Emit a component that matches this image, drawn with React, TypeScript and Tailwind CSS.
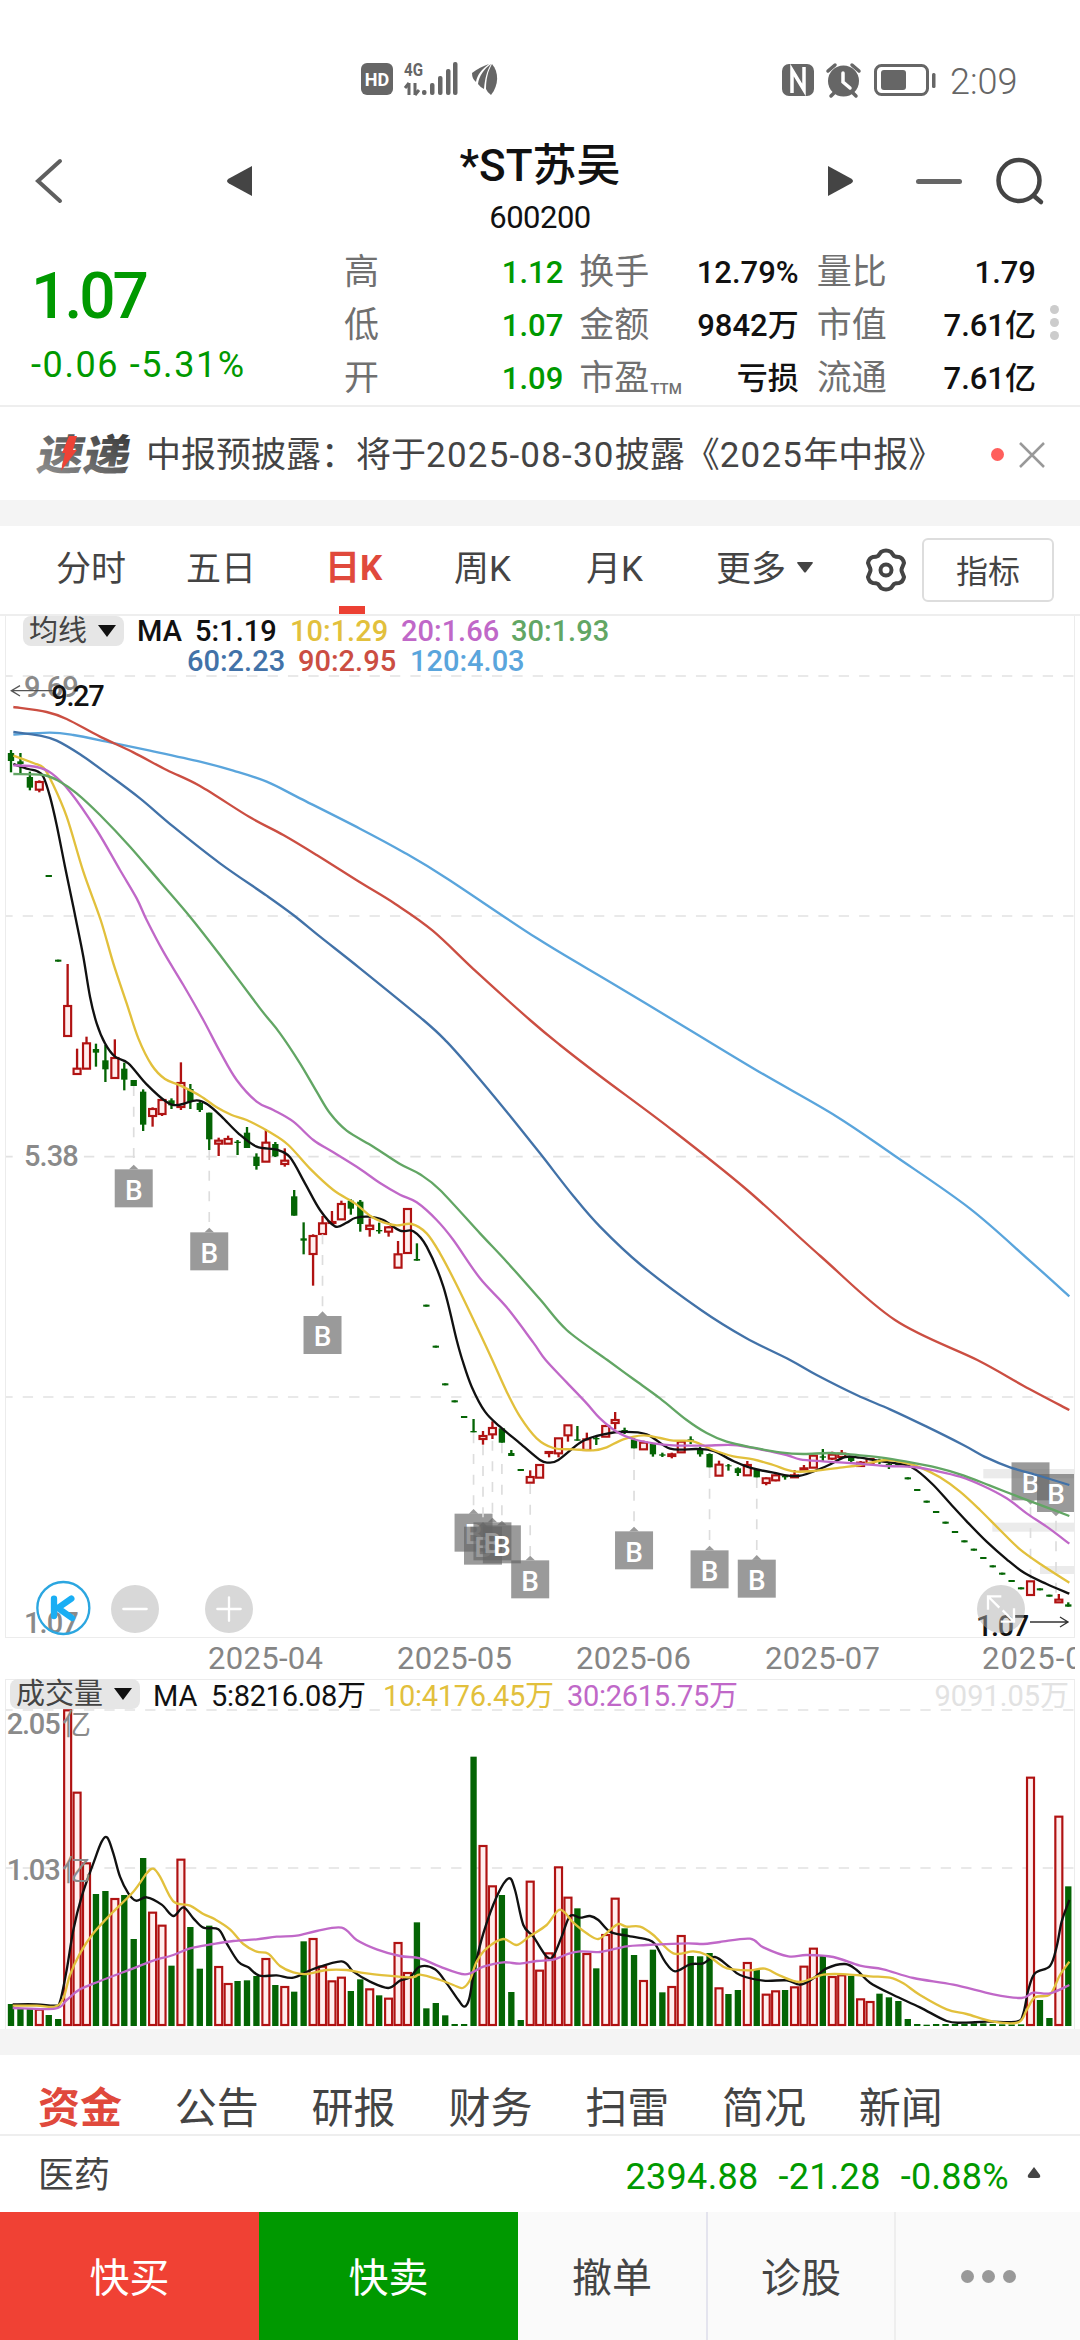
import type { ReactNode } from "react";

// Chart panes are drawn in thirds of a pixel.
const STEP = 28.32;
const FIRST = 33;
const VOLUME_BASE = 1038;

const UP = "#b01212";
const DOWN = "#046404";

// [high, body top, body bottom, low, volume], volume is negative on a falling day
type Candle = [number, number, number, number, number];

const candles: Candle[] = [
  [402, 411, 435, 469, -66],
  [411, 436, 444, 472, -52],
  [467, 483, 515, 523, -52],
  [493, 497, 522, 529, 52],
  [777, 777, 783, 783, -33],
  [1031, 1031, 1037, 1037, -21],
  [1044, 1169, 1261, 1261, 950],
  [1298, 1357, 1375, 1375, 703],
  [1262, 1281, 1359, 1359, 491],
  [1283, 1299, 1310, 1352, -396],
  [1287, 1333, 1360, 1398, -405],
  [1270, 1325, 1387, 1387, 384],
  [1340, 1358, 1391, 1423, -393],
  [1392, 1392, 1410, 1410, -261],
  [1420, 1427, 1526, 1545, -504],
  [1474, 1478, 1501, 1532, 343],
  [1447, 1451, 1495, 1500, 304],
  [1447, 1453, 1468, 1479, -181],
  [1339, 1400, 1474, 1482, 502],
  [1404, 1419, 1458, 1479, -297],
  [1457, 1461, 1482, 1488, -172],
  [1490, 1490, 1570, 1602, -301],
  [1565, 1573, 1584, 1620, 180],
  [1559, 1568, 1584, 1584, 129],
  [1572, 1577, 1581, 1617, -135],
  [1533, 1550, 1596, 1596, -137],
  [1612, 1622, 1650, 1661, -150],
  [1540, 1579, 1638, 1638, 204],
  [1578, 1584, 1621, 1623, -123],
  [1597, 1633, 1645, 1652, 120],
  [1722, 1741, 1799, 1799, -103],
  [1819, 1867, 1874, 1915, -254],
  [1855, 1859, 1915, 2009, 264],
  [1800, 1821, 1855, 1855, 181],
  [1785, 1817, 1822, 1822, 137],
  [1754, 1763, 1811, 1811, 148],
  [1750, 1754, 1778, 1796, -105],
  [1752, 1757, 1824, 1847, -140],
  [1807, 1828, 1840, 1862, 113],
  [1820, 1842, 1846, 1853, -92],
  [1830, 1833, 1848, 1862, 85],
  [1875, 1914, 1956, 1956, 252],
  [1778, 1778, 1912, 1912, 162],
  [1882, 1929, 1934, 1934, -311],
  [2066, 2066, 2072, 2072, -53],
  [2189, 2189, 2195, 2195, -69],
  [2302, 2302, 2308, 2308, -32],
  [2353, 2353, 2359, 2359, -6],
  [2400, 2400, 2406, 2406, -6],
  [2409, 2445, 2449, 2449, -808],
  [2445, 2459, 2470, 2486, 543],
  [2416, 2435, 2456, 2469, 422],
  [2437, 2437, 2480, 2480, -393],
  [2502, 2511, 2520, 2520, -102],
  [2559, 2559, 2565, 2565, -18],
  [2563, 2582, 2601, 2601, 436],
  [2546, 2546, 2586, 2586, 169],
  [2507, 2507, 2512, 2524, 221],
  [2466, 2466, 2513, 2524, 479],
  [2427, 2427, 2459, 2477, 388],
  [2430, 2470, 2474, 2474, -353],
  [2450, 2469, 2503, 2503, 219],
  [2460, 2466, 2470, 2487, -173],
  [2429, 2429, 2463, 2463, 276],
  [2388, 2411, 2422, 2440, 385],
  [2435, 2442, 2450, 2454, -293],
  [2467, 2470, 2497, 2497, -213],
  [2474, 2479, 2501, 2501, 138],
  [2482, 2484, 2515, 2522, -229],
  [2510, 2515, 2519, 2523, -101],
  [2510, 2514, 2521, 2527, 120],
  [2472, 2476, 2510, 2510, 273],
  [2461, 2470, 2476, 2484, -210],
  [2492, 2497, 2515, 2522, -209],
  [2512, 2514, 2554, 2554, -219],
  [2534, 2545, 2580, 2580, 116],
  [2544, 2548, 2551, 2564, -96],
  [2554, 2557, 2571, 2580, -108],
  [2535, 2546, 2579, 2579, 192],
  [2560, 2562, 2584, 2584, -168],
  [2584, 2586, 2602, 2608, 97],
  [2575, 2577, 2594, 2596, 107],
  [2578, 2580, 2584, 2591, -108],
  [2562, 2577, 2585, 2585, 119],
  [2547, 2556, 2562, 2562, 181],
  [2518, 2518, 2556, 2556, 235],
  [2499, 2521, 2525, 2536, -213],
  [2507, 2515, 2529, 2532, 150],
  [2502, 2512, 2524, 2524, 155],
  [2520, 2522, 2535, 2538, -150],
  [2535, 2539, 2551, 2551, 83],
  [2526, 2528, 2544, 2544, 75],
  [2528, 2535, 2538, 2544, -97],
  [2540, 2544, 2550, 2559, -86],
  [2542, 2542, 2548, 2548, -75],
  [2584, 2584, 2590, 2590, -21],
  [2619, 2619, 2625, 2625, -6],
  [2654, 2654, 2660, 2660, -4],
  [2685, 2685, 2691, 2691, -6],
  [2717, 2717, 2723, 2723, -6],
  [2745, 2745, 2751, 2751, -6],
  [2773, 2773, 2779, 2779, -7],
  [2798, 2798, 2804, 2804, -8],
  [2823, 2823, 2829, 2829, -8],
  [2848, 2848, 2854, 2854, -6],
  [2870, 2870, 2876, 2876, -5],
  [2892, 2892, 2898, 2898, -5],
  [2914, 2914, 2920, 2920, -5],
  [2895, 2895, 2938, 2938, 748],
  [2917, 2917, 2923, 2923, -78],
  [2936, 2936, 2942, 2942, -24],
  [2934, 2950, 2960, 2960, 631],
  [2959, 2965, 2972, 2972, -419],
];

const priceLines = [
  {
    color: "#5aa5dc",
    points:
      "40,356 150,350 220,357 330,379 450,404 600,437 700,464 800,497 900,547 1080,638 1208,707 1342,788 1611,967 1835,1101 2058,1235 2282,1370 2506,1499 2685,1620 2909,1777 3088,1933 3208,2041",
  },
  {
    color: "#cb4e42",
    points:
      "40,273 140,288 200,309 300,362 400,409 500,462 600,510 750,604 850,657 950,717 1080,799 1186,864 1298,944 1432,1070 1590,1212 1680,1287 1800,1380 2014,1540 2238,1719 2461,1920 2685,2112 2932,2232 3070,2309 3208,2382",
  },
  {
    color: "#4272a8",
    points:
      "40,348 120,359 170,374 240,415 320,472 420,547 520,632 660,742 800,839 880,897 960,962 1080,1057 1270,1212 1340,1277 1420,1367 1520,1487 1620,1612 1720,1740 1800,1832 1923,1947 2103,2082 2238,2166 2370,2232 2450,2277 2570,2337 2670,2380 2780,2432 2890,2487 2960,2525 3030,2554 3120,2580 3208,2607",
  },
  {
    color: "#111111",
    points:
      "40,444 85,459 110,465 130,482 150,542 170,627 195,752 220,872 228,912 250,1022 270,1142 290,1222 315,1282 345,1322 385,1342 440,1405 500,1458 535,1467 590,1453 625,1467 665,1502 715,1552 770,1592 830,1601 870,1624 915,1702 960,1782 1005,1831 1040,1820 1065,1806 1105,1802 1150,1812 1200,1844 1240,1846 1280,1892 1330,2012 1370,2172 1387,2232 1415,2312 1455,2387 1500,2432 1560,2482 1620,2532 1645,2540 1675,2532 1740,2480 1790,2460 1860,2448 1940,2455 2010,2498 2090,2499 2140,2505 2200,2535 2250,2555 2320,2570 2395,2580 2480,2550 2535,2523 2580,2525 2650,2537 2715,2546 2750,2563 2800,2607 2850,2662 2900,2716 2960,2777 3020,2830 3075,2872 3140,2904 3208,2933",
  },
  {
    color: "#e2c03c",
    points:
      "40,419 100,441 130,455 155,497 200,602 250,767 302,912 340,1042 380,1162 415,1267 455,1347 495,1389 540,1408 600,1439 650,1474 695,1497 740,1512 810,1549 865,1587 930,1658 1000,1722 1065,1762 1110,1799 1150,1819 1190,1828 1235,1824 1280,1852 1320,1912 1370,2007 1435,2142 1477,2232 1520,2327 1560,2402 1610,2467 1660,2496 1720,2500 1780,2503 1820,2494 1870,2470 1930,2458 1980,2466 2020,2474 2080,2476 2140,2502 2200,2521 2260,2530 2320,2547 2380,2566 2440,2565 2520,2555 2580,2547 2660,2532 2720,2542 2760,2554 2820,2584 2880,2627 2940,2682 3000,2742 3060,2800 3130,2850 3208,2900",
  },
  {
    color: "#c068c8",
    points:
      "40,448 110,453 155,472 210,527 290,642 360,762 410,847 440,912 490,1007 550,1107 610,1212 660,1307 710,1392 770,1457 820,1482 880,1517 940,1572 1000,1609 1080,1659 1140,1701 1200,1736 1250,1759 1310,1812 1360,1872 1440,1987 1520,2074 1600,2180 1637,2232 1700,2299 1760,2362 1800,2407 1850,2447 1900,2469 1960,2482 2020,2488 2110,2489 2200,2487 2280,2500 2360,2517 2400,2530 2470,2536 2550,2541 2660,2550 2740,2553 2810,2565 2880,2582 2950,2610 3020,2647 3080,2692 3140,2732 3208,2783",
  },
  {
    color: "#62a664",
    points:
      "40,474 130,477 180,497 230,532 300,597 390,692 480,797 570,902 660,1017 780,1177 840,1252 900,1342 950,1427 990,1492 1040,1544 1120,1592 1200,1644 1260,1675 1320,1722 1440,1852 1520,1937 1620,2050 1700,2142 1822,2232 1900,2289 1980,2347 2060,2412 2120,2451 2180,2477 2260,2495 2340,2509 2410,2514 2490,2511 2570,2517 2640,2524 2720,2537 2810,2555 2890,2578 2970,2609 3060,2644 3140,2674 3208,2700",
  },
];

const volumeLines = [
  {
    color: "#111111",
    points:
      "38,973 110,973 165,977 180,965 200,870 220,750 245,650 280,550 305,485 322,473 340,520 360,590 385,640 408,662 440,652 485,674 520,708 550,682 580,715 610,743 655,748 680,790 715,845 745,862 778,887 830,886 880,893 940,867 1025,844 1060,875 1110,905 1165,924 1200,902 1230,892 1260,860 1305,868 1340,910 1375,960 1393,980 1408,955 1425,860 1450,760 1490,650 1526,595 1545,630 1570,735 1600,770 1640,830 1660,828 1685,770 1710,708 1740,713 1770,708 1795,720 1830,755 1880,767 1940,778 1965,792 1995,845 2025,874 2070,853 2110,850 2145,831 2190,862 2220,885 2290,902 2360,901 2400,914 2440,895 2480,865 2535,852 2570,870 2610,908 2680,945 2760,982 2840,1023 2890,1028 2960,1025 3050,1025 3070,1000 3085,930 3105,880 3150,858 3170,800 3185,725 3208,660",
  },
  {
    color: "#e2c03c",
    points:
      "38,977 110,977 165,980 190,955 210,885 240,820 280,760 340,695 400,635 440,580 460,566 480,590 510,650 530,670 570,677 610,702 645,718 690,748 730,792 770,815 805,821 840,858 880,877 920,882 980,870 1040,870 1100,880 1230,892 1260,884 1320,900 1360,915 1388,924 1410,900 1430,845 1460,805 1510,777 1550,795 1590,768 1640,735 1680,689 1720,728 1760,760 1795,777 1830,750 1855,732 1880,740 1920,740 1960,765 2020,820 2080,814 2120,825 2170,860 2200,868 2250,871 2295,866 2340,887 2400,906 2470,884 2540,883 2610,889 2670,893 2710,910 2760,945 2840,988 2900,1002 2980,1025 3055,1027 3080,990 3105,952 3150,943 3180,885 3208,845",
  },
  {
    color: "#c068c8",
    points:
      "38,984 165,986 200,960 240,928 300,903 400,865 460,842 520,825 570,805 640,792 700,783 770,778 830,770 890,767 950,753 1025,743 1070,780 1130,808 1200,828 1260,835 1320,860 1395,883 1450,860 1510,847 1560,851 1610,843 1660,839 1700,823 1740,814 1800,816 1880,799 1940,795 2060,790 2110,792 2160,786 2250,776 2290,802 2365,829 2420,825 2500,831 2580,857 2650,868 2740,894 2860,914 2980,943 3065,954 3100,938 3150,940 3208,915",
  },
];

// [candle index, box top, line start]
const buys = [
  [13, 1660, 1410],
  [21, 1849, 1602],
  [33, 2100, 1855],
  [49, 2693, 2452],
  [50, 2732, 2488],
  [51, 2719, 2474],
  [52, 2728, 2482],
  [55, 2833, 2604],
  [66, 2746, 2500],
  [74, 2803, 2556],
  [79, 2831, 2586],
];

const at = (i: number) => FIRST + STEP * i;

// Catmull-Rom through the points, as cubic segments
function smooth(points: string) {
  const p = points.split(" ").map((s) => s.split(",").map(Number));
  let d = `M${p[0][0]} ${p[0][1]}`;
  for (let i = 0; i < p.length - 1; i++) {
    const a = p[i - 1] ?? p[i];
    const b = p[i];
    const c = p[i + 1];
    const e = p[i + 2] ?? c;
    d += `C${b[0] + (c[0] - a[0]) / 6} ${b[1] + (c[1] - a[1]) / 6} ${c[0] - (e[0] - b[0]) / 6} ${c[1] - (e[1] - b[1]) / 6} ${c[0]} ${c[1]}`;
  }
  return d;
}

function Grid({ ys }: { ys: number[] }) {
  return (
    <g stroke="#e2e2e2" strokeWidth={5} strokeDasharray="31 30.2">
      {ys.map((y) => (
        <line key={y} x1={7} x2={3222} y1={y} y2={y} />
      ))}
    </g>
  );
}

function Lines({ lines }: { lines: { color: string; points: string }[] }) {
  return (
    <g fill="none" strokeWidth={7} strokeLinejoin="round">
      {lines.map((l) => (
        <path key={l.color} d={smooth(l.points)} stroke={l.color} />
      ))}
    </g>
  );
}

function Box({ i, top, bottom }: { i: number; top: number; bottom: number }) {
  return (
    <rect x={at(i) - 10.5} y={top} width={21} height={Math.max(bottom - top, 2)} fill="#ffeeee" stroke={UP} strokeWidth={6.5} />
  );
}

function CandleStick({ i, c }: { i: number; c: Candle }) {
  const [high, top, bottom, low, volume] = c;
  const x = at(i);
  const up = volume > 0;
  return (
    <g>
      <line x1={x} x2={x} y1={high} y2={low} stroke={up ? UP : DOWN} strokeWidth={7} />
      {up ? (
        <Box i={i} top={top + 1} bottom={bottom - 1} />
      ) : (
        <rect x={x - 9.5} y={top} width={19} height={bottom - top} fill={DOWN} />
      )}
    </g>
  );
}

function Buy({ x, top, from, flip = false }: { x: number; top: number; from: number; flip?: boolean }) {
  return (
    <g>
      <line x1={x} x2={x} y1={from} y2={flip ? top + 130 : top - 14} stroke="#dddddd" strokeWidth={5} strokeDasharray="30 32" />
      <rect x={x - 57} y={top} width={114} height={114} fill="#666" fillOpacity={0.66} />
      <path
        d={flip ? `M${x - 13} ${top + 114}h26l-13 13z` : `M${x - 14} ${top}h28l-14-14z`}
        fill="#666"
        fillOpacity={0.66}
      />
      <text x={x} y={top + 91} textAnchor="middle" fontSize={84} fontWeight={500} fill="#fff">
        B
      </text>
    </g>
  );
}

function PriceChart() {
  return (
    <svg viewBox="18 177 3204 2889" className="block h-[963px] w-[1068px] font-[Roboto,sans-serif]">
      <Grid ys={[180, 900, 1622, 2343]} />
      <g fill="#ebebeb">
        <rect x={2950} y={2559} width={275} height={28} />
        <rect x={2977} y={2720} width={248} height={27} />
        <rect x={3120} y={2850} width={105} height={24} />
      </g>
      <g fontSize={87} fontWeight={500} fill="#8a8a8a">
        <text x={72} y={242} textLength={164}>9.69</text>
        <rect x={68} y={1590} width={168} height={64} fill="#fff" />
        <text x={72} y={1650} textLength={164}>5.38</text>
        <text x={72} y={3052} textLength={164}>1.07</text>
      </g>
      <path d="M34 224H158M60 209L34 224L60 240" stroke="#555" strokeWidth={4} fill="none" />
      <text x={154} y={269} fontSize={87} fontWeight={500} fill="#111" textLength={160}>9.27</text>
      {candles.map((c, i) => (
        <CandleStick key={i} i={i} c={c} />
      ))}
      {buys.map(([i, top, from]) => (
        <Buy key={i} x={at(i)} top={top} from={from} />
      ))}
      <Buy x={at(108)} top={2539} from={2890} flip />
      <Buy x={3168} top={2574} from={2930} flip />
      <Lines lines={priceLines} />
      <circle cx={190} cy={2976} r={78} fill="none" stroke="#2ba6e0" strokeWidth={7} />
      <path d="M162 2948v52M214 2948L174 2976L216 3006" stroke="#19aef4" strokeWidth={19} strokeLinecap="round" fill="none" />
      <circle cx={405} cy={2979} r={72} fill="#d8d8d8" />
      <path d="M370 2979H440" stroke="#fff" strokeWidth={7} strokeLinecap="round" />
      <circle cx={687} cy={2979} r={72} fill="#d8d8d8" />
      <path d="M652 2979H722M687 2944V3014" stroke="#fff" strokeWidth={7} strokeLinecap="round" />
      <text x={2928} y={3061} fontSize={87} fontWeight={500} fill="#111" textLength={160}>1.07</text>
      <circle cx={3003} cy={2979} r={72} fill="#b0b0b0" fillOpacity={0.5} />
      <path
        d="M2964 2981V2941H3004M2966 2943L2998 2975M3042 2977V3017H3002M3040 3015L3008 2983"
        stroke="#fff"
        strokeWidth={7}
        fill="none"
      />
      <path d="M3090 3018H3204M3180 3003L3204 3018L3180 3033" stroke="#333" strokeWidth={4} fill="none" />
    </svg>
  );
}

function VolumeChart() {
  return (
    <svg viewBox="18 84 3204 957" className="block h-[319px] w-[1068px] font-[Roboto,'Noto_Sans_CJK_SC',sans-serif]">
      <Grid ys={[90, 564]} />
      {candles.map(([, , , , v], i) =>
        v > 0 ? (
          <Box key={i} i={i} top={VOLUME_BASE - v + 3} bottom={VOLUME_BASE - 3} />
        ) : (
          <rect key={i} x={at(i) - 9.5} y={VOLUME_BASE + v} width={19} height={-v} fill={DOWN} />
        ),
      )}
      <Lines lines={volumeLines} />
      <g fontSize={87} fill="#8a8a8a">
        <text x={20} y={163} fontWeight={500} textLength={162}>2.05</text>
        <text x={186} y={166}>亿</text>
        <text x={20} y={599} fontWeight={500} textLength={162}>1.03</text>
        <text x={186} y={602}>亿</text>
      </g>
    </svg>
  );
}

function StatusBar() {
  return (
    <div className="flex h-[125px] items-start pt-[61px] pl-[360px] text-[#666]">
      <svg viewBox="0 0 140 38" className="h-[38px] w-[140px] font-[Roboto,sans-serif]" fill="currentColor">
        <rect x="1" y="2" width="32" height="32" rx="6" />
        <text x="17" y="24.500" textAnchor="middle" fontSize="18" fontWeight="700" fill="#fff">HD</text>
        <text x="44" y="15" fontSize="19" fontWeight="700" textLength="19" lengthAdjust="spacingAndGlyphs">4G</text>
        <path d="M49 22v12M49 22l-4 5M55 22v12M55 34l4-5" stroke="currentColor" strokeWidth="3" fill="none" />
        <rect x="62" y="29" width="4.500" height="5" rx="2" />
        <rect x="70" y="22" width="4.500" height="12" rx="2" />
        <rect x="78" y="15" width="4.500" height="19" rx="2" />
        <rect x="86" y="8" width="4.500" height="26" rx="2" />
        <rect x="93" y="1" width="4.500" height="33" rx="2" />
        <path d="M112 12C117 8 123 5 129 3C122 8 117 14 116 21Q112 18 112 12z" />
        <path d="M118 23C119 15 124 8 131 3C127 10 125 17 124 28Q120 26 118 23z" />
        <path d="M126 28C126 18 128 10 132 3C139 11 139 24 131 34Q127 31 126 28z" />
      </svg>
      <div className="ml-[281px] flex items-center">
        <svg viewBox="0 0 160 38" className="h-[38px] w-[160px]" fill="currentColor">
          <rect x="1" y="2" width="32" height="32" rx="7" />
          <path d="M11 31V8L23 28V5" stroke="#fff" strokeWidth="3.500" fill="none" />
          <circle cx="62.500" cy="19" r="15.500" />
          <path d="M62 11v9l7 6" stroke="#fff" strokeWidth="3.500" fill="none" strokeLinecap="round" />
          <path d="M47 9l7-6M78 9l-7-6M53 31l-3 3M72 31l3 3" stroke="currentColor" strokeWidth="3.500" strokeLinecap="round" />
          <rect x="94.500" y="3.500" width="52" height="29" rx="6" fill="none" stroke="currentColor" strokeWidth="3" />
          <rect x="100" y="8" width="25" height="20" rx="3" />
          <rect x="151" y="11" width="3.500" height="15" rx="1.500" />
        </svg>
        <span className="ml-[9px] pt-[2px] font-[Roboto,sans-serif] text-[36px] leading-[38px] font-light">2:09</span>
      </div>
    </div>
  );
}

function Header() {
  return (
    <div className="flex h-[119px] items-center pt-[3px]">
      <svg viewBox="0 0 30 46" className="ml-[34px] h-[46px] w-[30px] -translate-y-[5px]">
        <path d="M26 3L4 23L26 43" stroke="#5f5f5f" strokeWidth="4" fill="none" strokeLinecap="round" />
      </svg>
      <svg viewBox="0 0 28 32" className="ml-[161px] h-[32px] w-[28px] -translate-y-[5px]">
        <path d="M27 1V31L4 18.500Q0 16 4 13.500Z" fill="#444" />
      </svg>
      <div className="ml-[187px] flex w-[200px] flex-col items-center pt-[5px] text-[#111]">
        <h1 className="text-[44px] leading-[58px] font-medium whitespace-nowrap">*ST苏吴</h1>
        <span className="font-[Roboto,sans-serif] text-[31px] leading-[46px] tracking-[-0.5px]">600200</span>
      </div>
      <svg viewBox="0 0 28 32" className="ml-[187px] h-[32px] w-[28px] -translate-y-[5px]">
        <path d="M1 1V31L24 18.500Q28 16 24 13.500Z" fill="#444" />
      </svg>
      <div className="ml-[61px] h-[5px] w-[46px] -translate-y-[5px] rounded-full bg-[#666]" />
      <svg viewBox="0 0 50 50" className="ml-[33px] h-[50px] w-[50px] -translate-y-[5px]">
        <circle cx="24" cy="24.500" r="20.500" fill="none" stroke="#444" strokeWidth="4.500" />
        <path d="M39 40L46 46" stroke="#444" strokeWidth="4.500" strokeLinecap="round" />
      </svg>
    </div>
  );
}

const quoteRows = [
  ["高", "1.12", "换手", "12.79%", "量比", "1.79"],
  ["低", "1.07", "金额", "9842万", "市值", "7.61亿"],
  ["开", "1.09", "市盈", "亏损", "流通", "7.61亿"],
];

function Quote() {
  return (
    <div className="flex h-[163px] border-b-2 border-[#eee]">
      <div className="w-[344px] pl-[31px] font-[Roboto,sans-serif] text-[#090]">
        <div className="pt-[15px] text-[64px] leading-[76px] font-medium tracking-[-3px]">1.07</div>
        <div className="mt-[9px] text-[36px] leading-[42px] tracking-[1.6px] whitespace-pre">-0.06 -5.31%</div>
      </div>
      <div className="w-[692px] pt-[3px]">
        {quoteRows.map(([a, av, b, bv, c, cv]) => (
          <div key={a} className="flex h-[53px] items-center text-[35px] text-[#707070]">
            <span className="w-[60px]">{a}</span>
            <span className="w-[160px] text-right text-[31px] font-medium text-[#090]">{av}</span>
            <span className="ml-[16px] flex w-[110px] items-end">
              {b}
              {b === "市盈" && <small className="mb-[7px] ml-[1px] text-[15px] leading-[20px] font-medium">TTM</small>}
            </span>
            <span className="w-[110px] text-right text-[31px] font-medium text-[#111]">{bv}</span>
            <span className="ml-[18px] w-[80px]">{c}</span>
            <span className="w-[140px] text-right text-[31px] font-medium text-[#111]">{cv}</span>
          </div>
        ))}
      </div>
      <div className="ml-[14px] flex flex-col gap-[4px] pt-[61px]">
        <i className="size-[9px] rounded-full bg-[#ccc]" />
        <i className="size-[9px] rounded-full bg-[#ccc]" />
        <i className="size-[9px] rounded-full bg-[#ccc]" />
      </div>
    </div>
  );
}

function News() {
  return (
    <div className="flex h-[91px] items-center pl-[36px] text-[35px] text-[#444]">
      <svg viewBox="0 0 96 40" className="h-[40px] w-[96px] shrink-0 overflow-visible">
        <defs>
          <linearGradient id="ink" x1="0" x2="1" y1="1" y2="0">
            <stop offset="0" stopColor="#999" />
            <stop offset="1" stopColor="#333" />
          </linearGradient>
        </defs>
        <text
          x="6"
          y="35"
          fontSize="42"
          fontWeight="900"
          fill="url(#ink)"
          transform="skewX(-11)"
          textLength="93"
          lengthAdjust="spacingAndGlyphs"
        >
          速递
        </text>
        <path d="M33 1h8l-4 14h4L25 36l4-18h-3z" fill="#ee4236" />
      </svg>
      <span className="ml-[14px] pt-[3px] whitespace-nowrap">
        中报预披露：将于<span className="tracking-[1.2px]">2025-08-30</span>披露《<span className="tracking-[1.2px]">2025</span>年中报》
      </span>
      <i className="ml-auto size-[13px] shrink-0 rounded-full bg-[#ff5f5c]" />
      <svg viewBox="0 0 28 28" className="mr-[34px] ml-[14px] h-[28px] w-[28px] shrink-0">
        <path d="M2 2L26 26M26 2L2 26" stroke="#999" strokeWidth="2.500" />
      </svg>
    </div>
  );
}

function Tabs() {
  return (
    <div className="flex h-[90px] items-center border-b-2 border-[#eee] text-[35px] text-[#444]">
      <span className="ml-[56px] w-[130px]">分时</span>
      <span className="w-[139px]">五日</span>
      <span className="flex h-full w-[129px] flex-col items-start justify-between font-bold text-[#e0493c]">
        <span className="pt-[17px] leading-[52px]">日K</span>
        <i className="ml-[14px] h-[8px] w-[26px] bg-[#ec4033]" />
      </span>
      <span className="w-[132px]">周K</span>
      <span className="w-[130px]">月K</span>
      <span>更多</span>
      <svg viewBox="0 0 16 11" className="ml-[11px] h-[11px] w-[16px] -translate-y-[3px]">
        <path d="M1 0h14q1.500 0 .5 1.500L9 10q-1 1-2 0L.5 1.500Q-.5 0 1 0z" fill="#444" />
      </svg>
      <svg viewBox="0 0 44 44" className="ml-[51px] h-[44px] w-[44px] shrink-0" fill="none" stroke="#444" strokeWidth="4">
        <path
          d="M17 4Q22 1 27 4L30 8Q32 9 35 9Q39 10 40 15L38 20Q37 22 38 24L40 29Q39 34 35 35Q32 35 30 36L27 40Q22 43 17 40L14 36Q12 35 9 35Q5 34 4 29L6 24Q7 22 6 20L4 15Q5 10 9 9Q12 9 14 8Z"
          strokeLinejoin="round"
        />
        <circle cx="22" cy="22" r="5.500" />
      </svg>
      <button className="ml-[14px] h-[64px] w-[132px] rounded-[6px] border-2 border-[#ddd] pt-[3px] text-[32px]">指标</button>
    </div>
  );
}

function Chip({ children }: { children: ReactNode }) {
  return (
    <span className="flex h-[30px] items-center rounded-[8px] bg-[#e6e6e6] pr-[8px] pl-[6px] text-[29px] leading-[30px] text-[#444]">
      {children}
      <svg viewBox="0 0 18 12" className="ml-[11px] h-[12px] w-[18px]">
        <path d="M0 0H18L9 12Z" fill="#111" />
      </svg>
    </span>
  );
}

function PriceLegend() {
  return (
    <div className="h-[59px] text-[29px] leading-[30px] font-medium text-[#111]">
      <div className="flex h-[30px] items-center pl-[17px]">
        <Chip>
          <span className="font-normal">均线</span>
        </Chip>
        <span className="ml-[13px] w-[58px]">MA</span>
        <span className="w-[95px]">5:1.19</span>
        <span className="w-[111px] text-[#e2c03c]">10:1.29</span>
        <span className="w-[110px] text-[#c068c8]">20:1.66</span>
        <span className="text-[#62a664]">30:1.93</span>
      </div>
      <div className="flex h-[29px] items-center pl-[181px]">
        <span className="w-[111px] text-[#4272a8]">60:2.23</span>
        <span className="w-[112px] text-[#cb4e42]">90:2.95</span>
        <span className="text-[#5aa5dc]">120:4.03</span>
      </div>
    </div>
  );
}

function Dates() {
  return (
    <div className="mr-[5px] flex h-[41px] items-center overflow-hidden pl-[208px] text-[31px] leading-[41px] whitespace-nowrap text-[#858585]">
      <span className="w-[189px] shrink-0 tracking-[0.3px]">2025-04</span>
      <span className="w-[179px] shrink-0 tracking-[0.3px]">2025-05</span>
      <span className="w-[189px] shrink-0 tracking-[0.3px]">2025-06</span>
      <span className="w-[217px] shrink-0 tracking-[0.3px]">2025-07</span>
      <span className="shrink-0 tracking-[1px]">2025-08</span>
    </div>
  );
}

function VolumeLegend() {
  return (
    <div className="flex h-[28px] items-center pl-[4px] text-[29px] leading-[30px] whitespace-nowrap text-[#111]">
      <Chip>成交量</Chip>
      <span className="ml-[13px] w-[58px] pt-[3px]">MA</span>
      <span className="w-[172px] pt-[3px] tracking-[-0.3px]">5:8216.08万</span>
      <span className="w-[184px] pt-[3px] tracking-[-0.3px] text-[#e2c03c]">10:4176.45万</span>
      <span className="pt-[3px] tracking-[-0.3px] text-[#c068c8]">30:2615.75万</span>
      <span className="mr-[5px] ml-auto pt-[3px] text-[#e2e2e2]">9091.05万</span>
    </div>
  );
}

const sections = ["资金", "公告", "研报", "财务", "扫雷", "简况", "新闻"];

function Sections() {
  return (
    <div className="flex h-[81px] items-end gap-[54.8px] border-b-2 border-[#eee] pl-[38px] text-[42px] leading-[50px] text-[#444]">
      {sections.map((s, i) => (
        <span key={s} className={i === 0 ? "w-[82px] font-bold whitespace-nowrap text-[#e0493c]" : "w-[82px] whitespace-nowrap"}>
          {s}
        </span>
      ))}
    </div>
  );
}

function Sector() {
  return (
    <div className="flex h-[76px] items-center pr-[39px] pl-[38px] text-[36px] text-[#444]">
      <span className="pt-[4px]">医药</span>
      <div className="ml-auto flex gap-[20px] pt-[5px] tracking-[0.3px] text-[#090]">
        <span>2394.88</span>
        <span>-21.28</span>
        <span>-0.88%</span>
      </div>
      <svg viewBox="0 0 14 11" className="ml-[18px] h-[11px] w-[14px] -translate-y-[2px]">
        <path d="M7 0L13 8q1 3-2 3H3q-3 0-2-3z" fill="#444" />
      </svg>
    </div>
  );
}

function Actions() {
  return (
    <div className="flex h-[128px] bg-[#fafafa] text-[40px] text-[#444]">
      <button className="w-[259px] bg-[#f04134] pt-[6px] text-white">快买</button>
      <button className="w-[259px] bg-[#009900] pt-[6px] text-white">快卖</button>
      <button className="w-[188px] pt-[6px]">撤单</button>
      <button className="w-[188px] border-l-2 border-[#e4e4ee] pt-[6px]">诊股</button>
      <div className="flex flex-1 items-center justify-center gap-[8px] border-l-2 border-[#eee]">
        <i className="size-[13px] rounded-full bg-[#999]" />
        <i className="size-[13px] rounded-full bg-[#999]" />
        <i className="size-[13px] rounded-full bg-[#999]" />
      </div>
    </div>
  );
}

export default function App() {
  return (
    <div className="h-[2340px] w-[1080px] overflow-hidden bg-white font-[Roboto,'Noto_Sans_CJK_SC',sans-serif]">
      <StatusBar />
      <Header />
      <Quote />
      <div className="h-[2px]" />
      <News />
      <div className="h-[26px] bg-[#f4f4f4]" />
      <Tabs />
      <div className="mx-[5px] h-[1022px] border-x border-b border-[#ececec]">
        <PriceLegend />
        <PriceChart />
      </div>
      <Dates />
      <div className="mx-[5px] h-[350px] border-x border-t border-[#ececec]">
        <VolumeLegend />
        <VolumeChart />
      </div>
      <div className="h-[26px] bg-[#f4f4f4]" />
      <Sections />
      <Sector />
      <Actions />
    </div>
  );
}
